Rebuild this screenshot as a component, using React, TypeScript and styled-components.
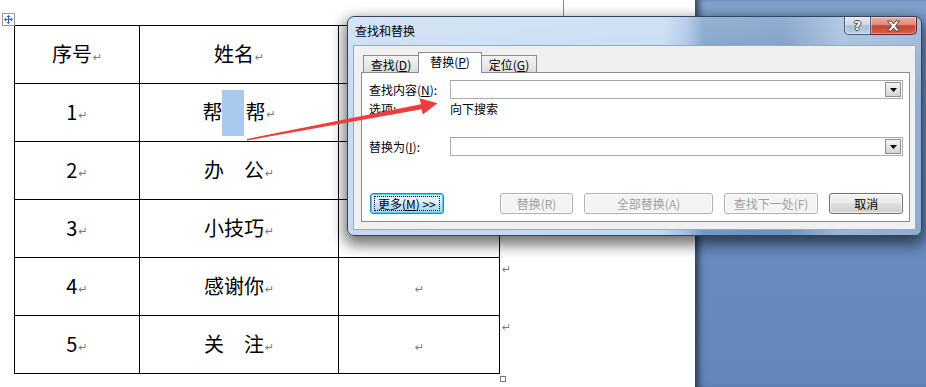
import styled, { createGlobalStyle } from "styled-components"
import type { ReactNode } from "react"

const GlobalStyle = createGlobalStyle`
  html, body {
    margin: 0;
    padding: 0;
  }
  body {
    font-family: "Noto Sans CJK SC", "Noto Sans", sans-serif;
  }
`

type Row = {
  no: string
  name: ReactNode
}

export default function App() {
  const rows: Row[] = [
    { no: '序号', name: '姓名' },
    { no: '1', name: <>帮<Highlight />帮</> },
    { no: '2', name: '办\u3000公' },
    { no: '3', name: '小技巧' },
    { no: '4', name: '感谢你' },
    { no: '5', name: '关\u3000注' },
  ]

  return (
    <>
      <GlobalStyle />
      <Screen>
        <Page>
          <MarginTick />
          <TableWrap>
            <MoveHandle>
              <svg width="9" height="9" viewBox="0 0 9 9">
                <path d="M4.5 0 L6.5 2 L5 2 L5 4 L7 4 L7 2.5 L9 4.5 L7 6.5 L7 5 L5 5 L5 7 L6.5 7 L4.5 9 L2.5 7 L4 7 L4 5 L2 5 L2 6.5 L0 4.5 L2 2.5 L2 4 L4 4 L4 2 L2.5 2 Z" fill="#3563b8" />
              </svg>
            </MoveHandle>
            <Table>
              <colgroup>
                <col style={{ width: 125 }} />
                <col style={{ width: 199 }} />
                <col style={{ width: 161 }} />
              </colgroup>
              <tbody>
                {rows.map((row, i) => (
                  <tr key={i}>
                    <Cell>{row.no}<Mark>↵</Mark></Cell>
                    <Cell>{row.name}<Mark>↵</Mark></Cell>
                    <Cell><Mark>↵</Mark></Cell>
                  </tr>
                ))}
              </tbody>
            </Table>
            <ResizeHandle />
          </TableWrap>
          <RowEnds>
            {rows.map((_, i) => (
              <RowEnd key={i}><Mark>↵</Mark></RowEnd>
            ))}
          </RowEnds>
        </Page>
        <Desk />

        <Dialog>
          <TitleBar>
            <Title>查找和替换</Title>
            <CaptionButtons>
              <CaptionButton>
                <HelpGlyph>?</HelpGlyph>
              </CaptionButton>
              <CaptionButton $close>
                <svg width="15" height="12" viewBox="0 0 15 12">
                  <path d="M1.5 1 L5 1 L7.5 4 L10 1 L13.5 1 L9.5 6 L13.5 11 L10 11 L7.5 8 L5 11 L1.5 11 L5.5 6 Z" fill="#fff" stroke="#4a4a4a" strokeWidth="1" strokeLinejoin="round" />
                </svg>
              </CaptionButton>
            </CaptionButtons>
          </TitleBar>

          <Client>
            <TabRow>
              <Tab>查找(<u>D</u>)</Tab>
              <Tab $active>替换(<u>P</u>)</Tab>
              <Tab>定位(<u>G</u>)</Tab>
            </TabRow>
            <Panel>
              <FieldRow>
                <Label>查找内容(<u>N</u>):</Label>
                <Combo>
                  <DropButton>
                    <svg width="7" height="4" viewBox="0 0 7 4"><path d="M0 0 L7 0 L3.5 4 Z" fill="#000" /></svg>
                  </DropButton>
                </Combo>
              </FieldRow>
              <OptionsRow>
                <Label>选项:</Label>
                <span>向下搜索</span>
              </OptionsRow>
              <FieldRow $gap={21}>
                <Label>替换为(<u>I</u>):</Label>
                <Combo>
                  <DropButton>
                    <svg width="7" height="4" viewBox="0 0 7 4"><path d="M0 0 L7 0 L3.5 4 Z" fill="#000" /></svg>
                  </DropButton>
                </Combo>
              </FieldRow>
              <ButtonRow>
                <Button $w={74} $variant="focus"><FocusRing>更多(<u>M</u>) &gt;&gt;</FocusRing></Button>
                <Button $w={74} $variant="disabled" $push>替换(R)</Button>
                <Button $w={129} $variant="disabled">全部替换(A)</Button>
                <Button $w={95} $variant="disabled">查找下一处(F)</Button>
                <Button $w={74}>取消</Button>
              </ButtonRow>
            </Panel>
          </Client>
        </Dialog>

        <Arrow width="926" height="387" viewBox="0 0 926 387">
          <polygon
            points="247,139 421,104.3 419.5,98.3 437.5,103.3 422.8,114.6 421.6,109.2 247,140.6"
            fill="#ef3d3d"
          />
        </Arrow>
      </Screen>
    </>
  )
}

const Screen = styled.div`
  position: relative;
  display: flex;
  width: 926px;
  height: 387px;
  overflow: hidden;
  background: #fff;
`

const Page = styled.div`
  position: relative;
  display: flex;
  align-items: flex-start;
  width: 695px;
  flex-shrink: 0;
  box-sizing: border-box;
  padding: 25px 0 0 14px;
  background: #fff;
`

const MarginTick = styled.div`
  position: absolute;
  left: 563px;
  top: 0;
  width: 1px;
  height: 16px;
  background: #8c8c8c;
`

const Desk = styled.div`
  flex: 1;
  background: linear-gradient(180deg, #83a3cf 0%, #6f93c3 12%, #6a8ec0 50%, #6386ba 100%);
  box-shadow: inset 7px 0 6px -3px rgba(25, 35, 55, 0.75);
`

const TableWrap = styled.div`
  position: relative;
`

const MoveHandle = styled.div`
  position: absolute;
  left: -12px;
  top: -12px;
  width: 9px;
  height: 9px;
  padding: 1px;
  border: 1px solid #9a9a9a;
  background: #fff;
  display: flex;
`

const ResizeHandle = styled.div`
  position: absolute;
  right: -6px;
  bottom: -8px;
  width: 4px;
  height: 4px;
  border: 1px solid #777;
  background: #fff;
`

const Table = styled.table`
  border-collapse: collapse;
  table-layout: fixed;
  width: 486px;
  font-family: "Noto Sans CJK SC", sans-serif;
  font-size: 20px;
  color: #000;
`

const Cell = styled.td`
  height: 54px;
  padding: 3px 0 0 0;
  border: 1px solid #000;
  text-align: center;
  vertical-align: middle;
  line-height: 24px;
`

const Highlight = styled.span`
  display: inline-block;
  width: 22px;
  height: 46px;
  margin: -3px 1px 0 0;
  vertical-align: middle;
  background: #a9c9ee;
`

const Mark = styled.span`
  font-family: "DejaVu Sans", sans-serif;
  font-size: 11px;
  color: #7a7a7a;
  margin-left: 1px;
  vertical-align: 1px;
`

const RowEnds = styled.div`
  display: flex;
  flex-direction: column;
  padding-left: 1px;
`

const RowEnd = styled.div`
  height: 58px;
  padding-top: 4px;
  box-sizing: border-box;
  line-height: 12px;
`

const Dialog = styled.div`
  position: absolute;
  left: 347px;
  top: 16px;
  width: 575px;
  height: 220px;
  box-sizing: border-box;
  display: flex;
  flex-direction: column;
  padding: 0 5px 5px 5px;
  border: 1px solid #33445c;
  border-radius: 7px;
  background:
    linear-gradient(180deg, rgba(255, 255, 255, 0.25) 0%, rgba(255, 255, 255, 0) 40%),
    linear-gradient(90deg, #c5dbf2 0%, #bfd8f1 55%, #a3c0e3 59%, #7297c5 62%, #6c91c0 76%, #9bb7d8 86%, #8eadd3 100%);
  box-shadow: 0 6px 14px 3px rgba(0, 0, 0, 0.55);
  font-family: "Noto Sans CJK SC", sans-serif;
  font-size: 12px;
  color: #000;
`

const TitleBar = styled.div`
  display: flex;
  align-items: flex-start;
  height: 28px;
`

const Title = styled.div`
  flex: 1;
  padding: 6px 0 0 2px;
  line-height: 16px;
`

const CaptionButtons = styled.div`
  display: flex;
  margin-right: -1px;
`

const CaptionButton = styled.div<{ $close?: boolean }>`
  display: flex;
  align-items: center;
  justify-content: center;
  width: ${({ $close }) => ($close ? '46px' : '27px')};
  height: 18px;
  box-sizing: border-box;
  border: 1px solid ${({ $close }) => ($close ? '#5a2a22' : '#4d5f78')};
  border-top: none;
  border-left: ${({ $close }) => ($close ? 'none' : '1px solid #4d5f78')};
  border-radius: ${({ $close }) => ($close ? '0 0 5px 0' : '0 0 0 5px')};
  background: ${({ $close }) =>
    $close
      ? 'linear-gradient(180deg, #eab0a3 0%, #db8a79 45%, #c5452f 52%, #d4614a 100%)'
      : 'linear-gradient(180deg, #e3ebf4 0%, #cbd8e7 45%, #a9bdd5 52%, #bed0e4 100%)'};
  box-shadow: inset 0 0 0 1px rgba(255, 255, 255, 0.35);
`

const HelpGlyph = styled.span`
  font-family: "DejaVu Sans", sans-serif;
  font-weight: bold;
  font-size: 13px;
  line-height: 13px;
  color: #fff;
  text-shadow:
    1px 0 0 #4a4a4a, -1px 0 0 #4a4a4a, 0 1px 0 #4a4a4a, 0 -1px 0 #4a4a4a;
`

const Client = styled.div`
  flex: 1;
  display: flex;
  flex-direction: column;
  padding: 6px 5px 7px 7px;
  border: 1px solid #97a9c0;
  background: #f0f0f0;
`

const TabRow = styled.div`
  position: relative;
  z-index: 1;
  display: flex;
  align-items: flex-end;
  height: 21px;
  margin: 0 0 -1px 2px;
`

const Tab = styled.div<{ $active?: boolean }>`
  display: flex;
  align-items: center;
  justify-content: center;
  width: ${({ $active }) => ($active ? '64px' : '55px')};
  height: ${({ $active }) => ($active ? '21px' : '17px')};
  margin-bottom: ${({ $active }) => ($active ? '0' : '1px')};
  box-sizing: border-box;
  padding-bottom: ${({ $active }) => ($active ? '3px' : '0')};
  border: 1px solid #898c95;
  border-bottom: none;
  border-left: ${({ $active }) => ($active ? '1px solid #898c95' : 'none')};
  border-right: ${({ $active }) => ($active ? '1px solid #898c95' : 'none')};
  background: ${({ $active }) => ($active ? '#fff' : 'linear-gradient(180deg, #f3f3f3 0%, #ebebeb 50%, #dddddd 100%)')};
  font-size: 12px;

  &:first-child {
    border-left: 1px solid #898c95;
  }
  &:last-child {
    border-right: 1px solid #898c95;
  }

  u {
    text-decoration: underline;
    text-underline-offset: 1px;
  }
`

const Panel = styled.div`
  flex: 1;
  display: flex;
  flex-direction: column;
  padding: 7px 6px 7px 7px;
  border: 1px solid #898c95;
  background: #fff;
`

const FieldRow = styled.div<{ $gap?: number }>`
  display: flex;
  align-items: center;
  margin-top: ${({ $gap }) => ($gap ? `${$gap}px` : '0')};
`

const OptionsRow = styled.div`
  display: flex;
  align-items: center;
  height: 14px;
  margin-top: 3px;
  line-height: 14px;
`

const Label = styled.div`
  width: 81px;
  flex-shrink: 0;
  white-space: nowrap;
`

const Combo = styled.div`
  flex: 1;
  display: flex;
  justify-content: flex-end;
  align-items: center;
  height: 19px;
  box-sizing: border-box;
  padding-right: 1px;
  border: 1px solid #abadb3;
  border-top-color: #a0a3aa;
  background: #fff;
`

const DropButton = styled.div`
  display: flex;
  align-items: center;
  justify-content: center;
  width: 16px;
  height: 15px;
  box-sizing: border-box;
  border: 1px solid #8e8f8f;
  background: linear-gradient(180deg, #f4f4f4 0%, #e6e6e6 50%, #d4d4d4 100%);
`

const ButtonRow = styled.div`
  display: flex;
  align-items: center;
  gap: 11px;
  margin-top: 37px;
  padding-left: 1px;
`

type ButtonProps = {
  $w: number
  $variant?: 'focus' | 'disabled'
  $push?: boolean
}

const Button = styled.div<ButtonProps>`
  display: flex;
  align-items: center;
  justify-content: center;
  width: ${({ $w }) => $w}px;
  height: 21px;
  box-sizing: border-box;
  margin-left: ${({ $push }) => ($push ? '45px' : '0')};
  border: 1px solid
    ${({ $variant }) => ($variant === 'focus' ? '#3c7fb1' : $variant === 'disabled' ? '#adb2b5' : '#707070')};
  border-radius: 3px;
  background: ${({ $variant }) =>
    $variant === 'focus'
      ? 'linear-gradient(180deg, #e8f5fd 0%, #d9f0fc 48%, #bee6fd 52%, #a7d9f5 100%)'
      : $variant === 'disabled'
        ? '#f4f4f4'
        : 'linear-gradient(180deg, #f2f2f2 0%, #ebebeb 48%, #dddddd 52%, #cfcfcf 100%)'};
  box-shadow: ${({ $variant }) => ($variant === 'focus' ? 'inset 0 0 0 1px #48d0f5' : 'inset 0 0 0 1px rgba(255,255,255,0.7)')};
  color: ${({ $variant }) => ($variant === 'disabled' ? '#a0a0a0' : '#000')};
  font-size: 12px;
  white-space: nowrap;
`

const FocusRing = styled.span`
  display: flex;
  align-items: center;
  justify-content: center;
  width: calc(100% - 6px);
  height: 15px;
  box-sizing: border-box;
  border: 1px dotted #000;

  u {
    text-decoration: underline;
  }
`

const Arrow = styled.svg`
  position: absolute;
  left: 0;
  top: 0;
  pointer-events: none;
`
